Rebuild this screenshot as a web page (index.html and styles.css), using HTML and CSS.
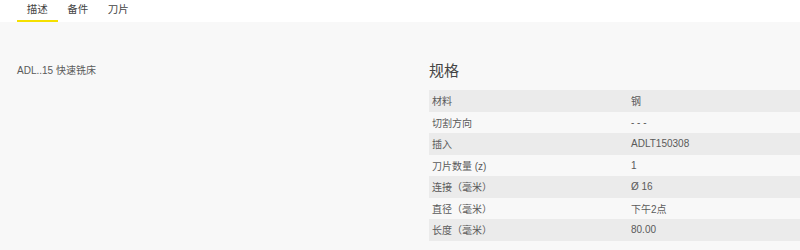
FILE: index.html
```html
<!DOCTYPE html>
<html lang="zh">

<head>
    <meta charset="UTF-8">
    <meta name="viewport" content="width=device-width, initial-scale=1.0">
    <title>产品详情</title>
    <link rel="stylesheet" href="styles.css">
</head>

<body>
    <div class="tabs">
        <a class="tab active" href="#">描述</a>
        <a class="tab" href="#">备件</a>
        <a class="tab" href="#">刀片</a>
    </div>

    <div class="content">
        <div class="description">
            <p>ADL..15 快速铣床</p>
        </div>

        <div class="specs">
            <h2>规格</h2>
            <table class="spec-table">
                <tr><td>材料</td><td>钢</td></tr>
                <tr><td>切割方向</td><td>- - -</td></tr>
                <tr><td>插入</td><td>ADLT150308</td></tr>
                <tr><td>刀片数量 (z)</td><td>1</td></tr>
                <tr><td>连接（毫米）</td><td>Ø 16</td></tr>
                <tr><td>直径（毫米）</td><td>下午2点</td></tr>
                <tr><td>长度（毫米）</td><td>80.00</td></tr>
            </table>
        </div>
    </div>
</body>

</html>
```

FILE: styles.css
```css
* {
    margin: 0;
    padding: 0;
    box-sizing: border-box;
    font-family: 'Liberation Sans', Arial, 'Noto Sans CJK SC', sans-serif;
}

body {
    background: #f8f8f8;
    color: #5a5a5a;
    font-size: 10px;
}

.tabs {
    display: flex;
    background: #ffffff;
    padding-left: 17px;
    height: 22px;
}

.tab {
    display: block;
    width: 40.5px;
    height: 22px;
    padding-top: 1px;
    text-align: center;
    color: #444;
    text-decoration: none;
    font-size: 10.5px;
    border-bottom: 2px solid transparent;
}

.tab.active {
    border-bottom-color: #f5e000;
}

.content {
    display: flex;
    padding: 40px 0 0 17px;
}

.description {
    width: 412px;
}

.specs {
    flex: 1;
}

.specs h2 {
    font-size: 15px;
    font-weight: normal;
    color: #444;
    margin-bottom: 10px;
    line-height: 18px;
}

.spec-table {
    width: 100%;
    border-collapse: collapse;
}

.spec-table td {
    height: 21.5px;
    padding: 0 3px;
}

.spec-table td:first-child {
    width: 199px;
}

.spec-table tr:nth-child(odd) {
    background: #ebebeb;
}
```
